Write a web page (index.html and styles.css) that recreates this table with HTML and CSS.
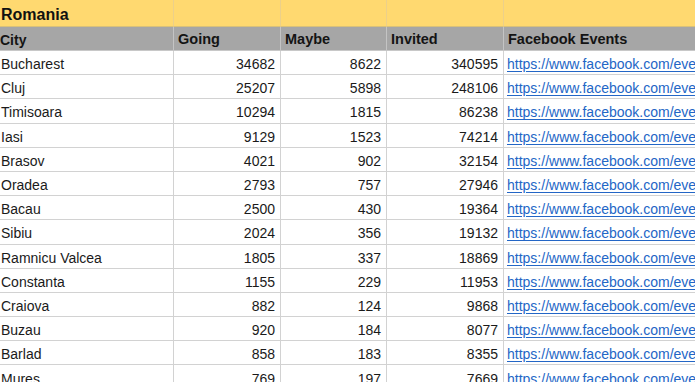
FILE: index.html
```html
<!DOCTYPE html>
<html>
<head>
<meta charset="utf-8">
<link rel="stylesheet" href="styles.css">
</head>
<body>
<div class="sheet">
  <div class="row title">
    <div class="cell c1">Romania</div><div class="cell c2"></div><div class="cell c3"></div><div class="cell c4"></div><div class="cell c5"></div>
  </div>
  <div class="row head">
    <div class="cell c1">City</div><div class="cell c2">Going</div><div class="cell c3">Maybe</div><div class="cell c4">Invited</div><div class="cell c5">Facebook Events</div>
  </div>
  <div class="row"><div class="cell c1">Bucharest</div><div class="cell c2 num">34682</div><div class="cell c3 num">8622</div><div class="cell c4 num">340595</div><div class="cell c5"><a class="link">https://www.facebook.com/events/</a></div></div>
  <div class="row"><div class="cell c1">Cluj</div><div class="cell c2 num">25207</div><div class="cell c3 num">5898</div><div class="cell c4 num">248106</div><div class="cell c5"><a class="link">https://www.facebook.com/events/</a></div></div>
  <div class="row"><div class="cell c1">Timisoara</div><div class="cell c2 num">10294</div><div class="cell c3 num">1815</div><div class="cell c4 num">86238</div><div class="cell c5"><a class="link">https://www.facebook.com/events/</a></div></div>
  <div class="row"><div class="cell c1">Iasi</div><div class="cell c2 num">9129</div><div class="cell c3 num">1523</div><div class="cell c4 num">74214</div><div class="cell c5"><a class="link">https://www.facebook.com/events/</a></div></div>
  <div class="row"><div class="cell c1">Brasov</div><div class="cell c2 num">4021</div><div class="cell c3 num">902</div><div class="cell c4 num">32154</div><div class="cell c5"><a class="link">https://www.facebook.com/events/</a></div></div>
  <div class="row"><div class="cell c1">Oradea</div><div class="cell c2 num">2793</div><div class="cell c3 num">757</div><div class="cell c4 num">27946</div><div class="cell c5"><a class="link">https://www.facebook.com/events/</a></div></div>
  <div class="row"><div class="cell c1">Bacau</div><div class="cell c2 num">2500</div><div class="cell c3 num">430</div><div class="cell c4 num">19364</div><div class="cell c5"><a class="link">https://www.facebook.com/events/</a></div></div>
  <div class="row"><div class="cell c1">Sibiu</div><div class="cell c2 num">2024</div><div class="cell c3 num">356</div><div class="cell c4 num">19132</div><div class="cell c5"><a class="link">https://www.facebook.com/events/</a></div></div>
  <div class="row"><div class="cell c1">Ramnicu Valcea</div><div class="cell c2 num">1805</div><div class="cell c3 num">337</div><div class="cell c4 num">18869</div><div class="cell c5"><a class="link">https://www.facebook.com/events/</a></div></div>
  <div class="row"><div class="cell c1">Constanta</div><div class="cell c2 num">1155</div><div class="cell c3 num">229</div><div class="cell c4 num">11953</div><div class="cell c5"><a class="link">https://www.facebook.com/events/</a></div></div>
  <div class="row"><div class="cell c1">Craiova</div><div class="cell c2 num">882</div><div class="cell c3 num">124</div><div class="cell c4 num">9868</div><div class="cell c5"><a class="link">https://www.facebook.com/events/</a></div></div>
  <div class="row"><div class="cell c1">Buzau</div><div class="cell c2 num">920</div><div class="cell c3 num">184</div><div class="cell c4 num">8077</div><div class="cell c5"><a class="link">https://www.facebook.com/events/</a></div></div>
  <div class="row"><div class="cell c1">Barlad</div><div class="cell c2 num">858</div><div class="cell c3 num">183</div><div class="cell c4 num">8355</div><div class="cell c5"><a class="link">https://www.facebook.com/events/</a></div></div>
  <div class="row"><div class="cell c1">Mures</div><div class="cell c2 num">769</div><div class="cell c3 num">197</div><div class="cell c4 num">7669</div><div class="cell c5"><a class="link">https://www.facebook.com/events/</a></div></div>
</div>
</body>
</html>
```
FILE: styles.css
```css
html, body {
  margin: 0;
  padding: 0;
  background: #ffffff;
  overflow: hidden;
}
.sheet {
  width: 695px;
  height: 382px;
  overflow: hidden;
  font-family: "Liberation Sans", Arial, sans-serif;
  font-size: 14px;
  color: #1a1a1a;
}
.row {
  display: grid;
  grid-template-columns: 174px 107px 106px 117px 300px;
  height: 24.2px;
}
.cell {
  box-sizing: border-box;
  border-right: 1px solid #d2d2d2;
  border-bottom: 1px solid #d2d2d2;
  padding: 3px 5px 0 3px;
  display: flex;
  align-items: center;
  white-space: nowrap;
  overflow: hidden;
  line-height: 1;
}
.c1 { padding-left: 1px; }
.num { justify-content: flex-end; }
.title {
  height: 27px;
  background: #ffd970;
}
.title .cell {
  border-right-color: #ecd08a;
  border-bottom-color: #d9c17a;
  font-weight: bold;
  font-size: 16px;
  color: #111;
  padding-top: 3px;
}
.head {
  height: 24px;
  background: #a6a6a6;
}
.head .cell {
  border-right-color: #c4c4c4;
  border-bottom-color: #c8c8c8;
  font-weight: bold;
  font-size: 14.5px;
  color: #141414;
  padding-left: 4px;
  padding-top: 1px;
}
.head .c1 { padding-left: 0; font-size: 14px; padding-top: 3px; }
.link {
  color: #2366c6;
  text-decoration: underline;
  text-decoration-color: #2366c6;
  text-underline-offset: 2px;
}
```
